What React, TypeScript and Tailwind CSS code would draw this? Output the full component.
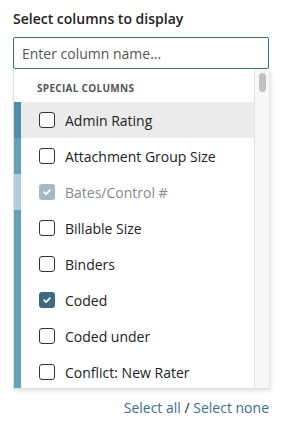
import { useState } from "react"

type Col = { name: string; checked?: boolean; disabled?: boolean; bar: string }

const columns: Col[] = [
  { name: "Admin Rating", bar: "bg-[#4f8da8]" },
  { name: "Attachment Group Size", bar: "bg-[#66a2ba]" },
  { name: "Bates/Control #", checked: true, disabled: true, bar: "bg-[#abd0dc]" },
  { name: "Billable Size", bar: "bg-[#66a2ba]" },
  { name: "Binders", bar: "bg-[#66a2ba]" },
  { name: "Coded", checked: true, bar: "bg-[#66a2ba]" },
  { name: "Coded under", bar: "bg-[#66a2ba]" },
  { name: "Conflict: New Rater", bar: "bg-[#66a2ba]" },
]

function Check({ checked, disabled }: { checked?: boolean; disabled?: boolean }) {
  if (checked) {
    return (
      <span
        className={`flex h-4 w-4 shrink-0 items-center justify-center rounded-[3px] ${
          disabled ? "bg-[#a3bac6]" : "bg-[#3d6a82]"
        }`}
      >
        <svg className="h-2.5 w-2.5 text-white" viewBox="0 0 12 12" fill="none">
          <path d="M2.5 6.2l2.3 2.3 4.7-4.8" stroke="currentColor" strokeWidth={2} strokeLinecap="round" strokeLinejoin="round" />
        </svg>
      </span>
    )
  }
  return <span className="h-4 w-4 shrink-0 rounded-[3px] border border-[#333] bg-white" />
}

export default function App() {
  const [query, setQuery] = useState("")

  return (
    <div className="h-[426px] w-[282px] bg-white px-[13px] pt-[9px] font-['Open_Sans',sans-serif] text-[#222]">
      <h2 className="text-[14px] font-semibold leading-[20px]">Select columns to display</h2>

      <input
        value={query}
        onChange={(e) => setQuery(e.target.value)}
        placeholder="Enter column name..."
        className="mt-[8px] h-[32px] w-full rounded-[2px] border border-[#3d6e87] px-[8px] text-[14px] text-[#333] outline-none placeholder:text-[#555]"
      />

      <div className="flex h-[320px] w-full overflow-hidden border-b border-[#ddd] shadow-[2px_2px_4px_rgba(0,0,0,0.12)]">
        <div className="flex-1 border-l border-[#e0e0e0]">
          <div className="flex h-[33px] items-end pb-[6px] pl-[23px] text-[10px] font-bold tracking-[0.3px] text-[#555]">
            SPECIAL COLUMNS
          </div>
          {columns.map((c, i) => (
            <div key={c.name} className={`flex h-[36px] items-center ${i === 0 ? "bg-[#ebebeb]" : ""}`}>
              <div className={`h-full w-[7px] ${c.bar}`} />
              <div className="ml-[18px] flex items-center gap-[10px]">
                <Check checked={c.checked} disabled={c.disabled} />
                <span className={`text-[14px] ${c.disabled ? "text-[#888]" : "text-[#222]"}`}>{c.name}</span>
              </div>
            </div>
          ))}
        </div>
        <div className="w-[15px] border-l border-[#e6e6e6] bg-[#f7f7f7] pt-[4px]">
          <div className="mx-auto h-[19px] w-[7px] rounded-full bg-[#c1c1c1]" />
        </div>
      </div>

      <div className="mt-[8px] text-right text-[14px]">
        <a className="text-[#3d6e87]">Select all</a>
        <span className="text-[#222]"> / </span>
        <a className="text-[#3d6e87]">Select none</a>
      </div>
    </div>
  )
}
